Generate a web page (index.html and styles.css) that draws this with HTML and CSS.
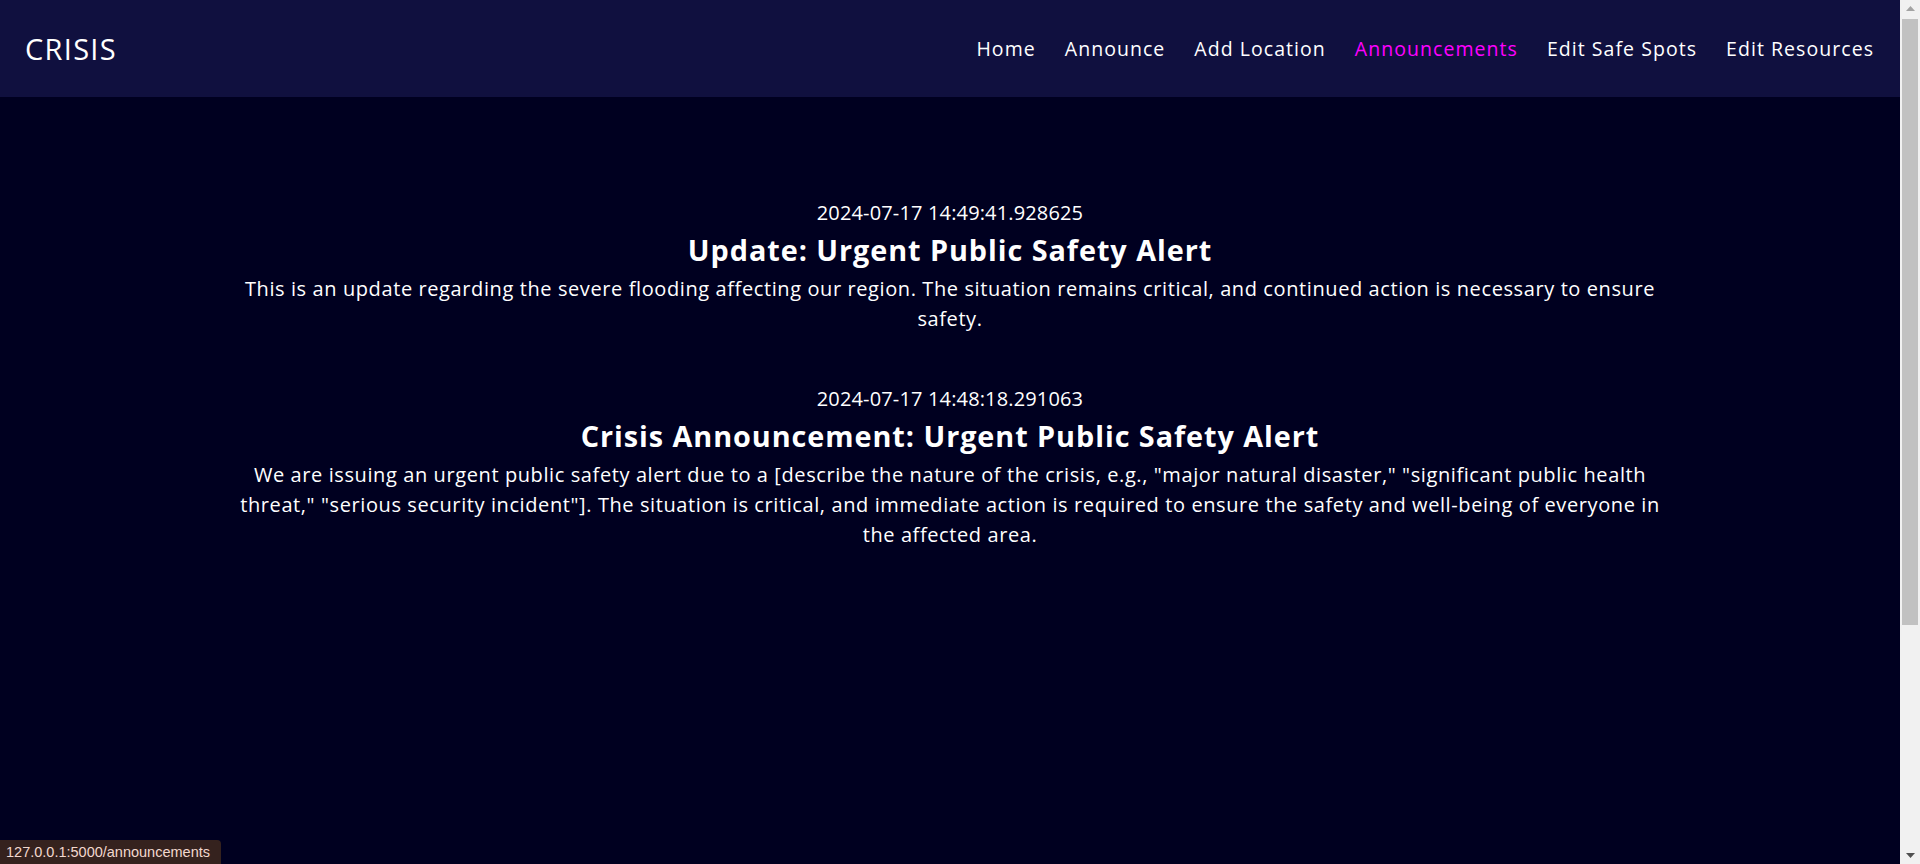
FILE: index.html
```html
<!DOCTYPE html>
<html lang="en">
<head>
<meta charset="utf-8">
<title>Announcements</title>
<link rel="stylesheet" href="styles.css">
</head>
<body>
<div class="page">
  <header class="navbar">
    <a class="brand" href="#">CRISIS</a>
    <nav class="nav-links">
      <a href="#">Home</a>
      <a href="#">Announce</a>
      <a href="#">Add Location</a>
      <a href="#" class="active">Announcements</a>
      <a href="#">Edit Safe Spots</a>
      <a href="#">Edit Resources</a>
    </nav>
  </header>
  <main class="content">
    <article class="announcement">
      <p class="timestamp">2024-07-17 14:49:41.928625</p>
      <h2 class="title">Update: Urgent Public Safety Alert</h2>
      <p class="body">This is an update regarding the severe flooding affecting our region. The situation remains critical, and continued action is necessary to ensure safety.</p>
    </article>
    <article class="announcement">
      <p class="timestamp">2024-07-17 14:48:18.291063</p>
      <h2 class="title">Crisis Announcement: Urgent Public Safety Alert</h2>
      <p class="body">We are issuing an urgent public safety alert due to a [describe the nature of the crisis, e.g., "major natural disaster," "significant public health threat," "serious security incident"]. The situation is critical, and immediate action is required to ensure the safety and well-being of everyone in the affected area.</p>
    </article>
  </main>
</div>
<div class="status-bubble">127.0.0.1:5000/announcements</div>
<div class="scrollbar">
  <div class="sb-btn sb-up"><svg width="9" height="5" viewBox="0 0 9 5"><path d="M0 5 L4.5 0 L9 5 Z" fill="#a3a3a3"/></svg></div>
  <div class="sb-track"><div class="sb-thumb"></div></div>
  <div class="sb-btn sb-down"><svg width="9" height="5" viewBox="0 0 9 5"><path d="M0 0 L4.5 5 L9 0 Z" fill="#505050"/></svg></div>
</div>
</body>
</html>
```
FILE: styles.css
```css
html, body {
  margin: 0;
  height: 100%;
  overflow: hidden;
}

body {
  background: #000020;
  color: #ffffff;
  font-family: "Open Sans", "Liberation Sans", sans-serif;
}

.page {
  margin-right: 20px;
}

.navbar {
  height: 97px;
  display: flex;
  align-items: center;
  justify-content: space-between;
  padding: 0 26px 0 25px;
  background: #10103f;
}

.brand {
  font-size: 29px;
  letter-spacing: 1.3px;
  color: #ffffff;
  text-decoration: none;
}

.nav-links {
  display: flex;
  gap: 29px;
}

.nav-links a {
  font-size: 19.5px;
  letter-spacing: 1.05px;
  color: #ffffff;
  text-decoration: none;
}

.nav-links a.active {
  color: #ff00ff;
}

.content {
  padding-top: 101px;
}

.announcement {
  width: 75%;
  margin: 0 auto 50px;
  text-align: center;
}

.timestamp {
  margin: 0;
  font-size: 20px;
  line-height: 30px;
  letter-spacing: 0.15px;
}

.title {
  margin: 3px 0 0;
  font-size: 28.8px;
  font-weight: 700;
  line-height: 38px;
  letter-spacing: 0.95px;
}

.body {
  margin: 5px 0 0;
  font-size: 20px;
  line-height: 30px;
  letter-spacing: 0.6px;
}

.status-bubble {
  position: fixed;
  left: 0;
  bottom: 0;
  height: 24px;
  padding: 0 11px 0 6px;
  display: flex;
  align-items: center;
  background: #35221e;
  color: #f2d8ce;
  font-family: "Liberation Sans", Arial, sans-serif;
  font-size: 14.5px;
  border-top-right-radius: 4px;
}

.scrollbar {
  position: fixed;
  top: 0;
  right: 0;
  width: 20px;
  height: 100%;
  background: #f1f1f1;
  display: flex;
  flex-direction: column;
}

.sb-btn {
  height: 17px;
  display: flex;
  align-items: center;
  justify-content: center;
}

.sb-track {
  flex: 1;
  padding: 2px 2px 0;
}

.sb-thumb {
  height: 606px;
  background: #c1c1c1;
}
```
